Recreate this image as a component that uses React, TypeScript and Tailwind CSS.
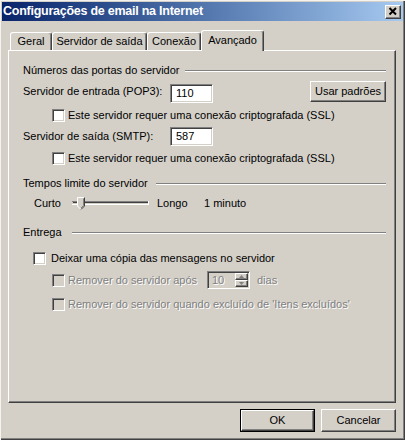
import React from "react";

const raised =
  "border border-t-white border-l-white border-r-[#404040] border-b-[#404040] shadow-[inset_-1px_-1px_0_#808080]";
const sunken =
  "border border-t-[#808080] border-l-[#808080] border-r-white border-b-white shadow-[inset_1px_1px_0_#404040,inset_-1px_-1px_0_#d4d0c8]";
const grayText = "text-[#808080] [text-shadow:1px_1px_0_#ffffff]";

function Checkbox({ disabled }: { disabled?: boolean }) {
  return (
    <span
      className={`block w-[13px] h-[13px] shrink-0 ${sunken} ${disabled ? "bg-[#d4d0c8]" : "bg-white"}`}
    />
  );
}

function GroupHeader({ label, labelWidth }: { label: string; labelWidth: string }) {
  return (
    <div className="flex items-center h-[13px]">
      <span className={`whitespace-nowrap shrink-0 ${labelWidth}`}>{label}</span>
      <div className="flex-1 h-[2px] border-t border-t-[#808080] border-b border-b-white" />
    </div>
  );
}

function Tab({ label, width, selected }: { label: string; width: string; selected?: boolean }) {
  return (
    <div
      className={`${width} flex items-center justify-center rounded-t-[3px] border-t border-l border-r border-t-white border-l-white border-r-[#404040] shadow-[inset_-1px_0_0_#808080] bg-[#d4d0c8] ${
        selected ? "h-[21px] pb-[2px]" : "h-[18px] mb-px"
      }`}
    >
      {label}
    </div>
  );
}

function Slider() {
  return (
    <svg width="80" height="20" viewBox="0 0 80 20" className="shrink-0">
      <line x1="0" y1="8.5" x2="77" y2="8.5" stroke="#808080" />
      <line x1="1" y1="9.5" x2="76" y2="9.5" stroke="#404040" />
      <line x1="0" y1="11.5" x2="77" y2="11.5" stroke="#ffffff" />
      <line x1="76.5" y1="8" x2="76.5" y2="12" stroke="#ffffff" />
      <polygon points="5,4 13,4 13,13 9,17 5,13" fill="#d4d0c8" />
      <polyline points="5.5,13 5.5,4.5 12.5,4.5" fill="none" stroke="#ffffff" />
      <polyline points="5.5,13 9,16.5" fill="none" stroke="#ffffff" />
      <polyline points="12.5,4.5 12.5,13 9,16.5" fill="none" stroke="#404040" />
      <polyline points="11.5,5.5 11.5,12.5 9,15" fill="none" stroke="#808080" />
    </svg>
  );
}

function SpinBox() {
  return (
    <div className={`w-[43px] h-[18px] shrink-0 flex items-stretch bg-[#d4d0c8] ${sunken}`}>
      <span className={`flex-1 pl-[4px] leading-[16px] ${grayText}`}>10</span>
      <div className="w-[15px] flex flex-col p-px">
        {[0, 1].map((i) => (
          <div key={i} className={`flex-1 flex items-center justify-center bg-[#d4d0c8] ${raised}`}>
            <svg width="5" height="3" viewBox="0 0 5 3">
              <polygon points={i === 0 ? "2.5,0 5,3 0,3" : "0,0 5,0 2.5,3"} fill="#808080" />
            </svg>
          </div>
        ))}
      </div>
    </div>
  );
}

function Button({ label, isDefault }: { label: string; isDefault?: boolean }) {
  const inner = (
    <div className={`h-full w-full flex items-center justify-center bg-[#d4d0c8] ${raised}`}>
      {label}
    </div>
  );
  return isDefault ? (
    <div className="w-[75px] h-[23px] border border-black">{inner}</div>
  ) : (
    <div className="w-[75px] h-[23px]">{inner}</div>
  );
}

export default function App() {
  return (
    <div className="w-[405px] h-[440px] bg-[#d4d0c8] overflow-hidden flex flex-col font-['Liberation_Sans',Arial,sans-serif] text-[11px] leading-[13px] text-black shadow-[inset_1px_1px_0_#f4f3ef,inset_-1px_-1px_0_#404040,inset_-2px_-2px_0_#808080]">
      {/* title bar */}
      <div className="mt-[2px] mx-[2px] h-[19px] flex items-center bg-linear-to-r from-[#0a246a] to-[#a6caf0]">
        <span className="pl-[1px] text-white font-bold text-[12.5px] tracking-[-0.25px] whitespace-nowrap">
          Configurações de email na Internet
        </span>
        <div className={`ml-auto mr-[2px] w-[16px] h-[14px] flex items-center justify-center bg-[#d4d0c8] ${raised}`}>
          <svg width="10" height="9" viewBox="0 0 10 9">
            <path d="M1.5 1 L8 7.5 M8 1 L1.5 7.5" stroke="#000" strokeWidth="2" />
          </svg>
        </div>
      </div>

      {/* tabs */}
      <div className="mt-[9px] ml-[10px] h-[21px] -mb-px relative z-10 flex items-end">
        <Tab label="Geral" width="w-[42px]" />
        <Tab label="Servidor de saída" width="w-[95px]" />
        <Tab label="Conexão" width="w-[54px]" />
        <Tab label="Avançado" width="w-[63px]" selected />
      </div>

      {/* panel */}
      <div className="ml-[8px] w-[388px] h-[353px] flex flex-col pl-[14px] pr-[9px] border border-t-white border-l-white border-r-[#404040] border-b-[#404040] shadow-[inset_-1px_-1px_0_#808080]">
        <div className="mt-[13px]">
          <GroupHeader label="Números das portas do servidor" labelWidth="w-[162px]" />
        </div>

        <div className="mt-[4px] h-[21px] flex">
          <span className="w-[147px] self-center whitespace-nowrap">Servidor de entrada (POP3):</span>
          <div className={`mt-[3px] w-[43px] h-[19px] bg-white pl-[5px] leading-[17px] ${sunken}`}>110</div>
          <div className="ml-auto w-[76px] h-[21px]">
            <div className={`h-full flex items-center justify-center bg-[#d4d0c8] ${raised}`}>Usar padrões</div>
          </div>
        </div>

        <div className="mt-[7px] h-[13px] pl-[29px] flex items-center">
          <Checkbox />
          <span className="ml-[3px] whitespace-nowrap">Este servidor requer uma conexão criptografada (SSL)</span>
        </div>

        <div className="mt-[5px] h-[19px] flex items-center">
          <span className="w-[147px] whitespace-nowrap">Servidor de saída (SMTP):</span>
          <div className={`w-[43px] h-[19px] bg-white pl-[5px] leading-[17px] ${sunken}`}>587</div>
        </div>

        <div className="mt-[6px] h-[13px] pl-[29px] flex items-center">
          <Checkbox />
          <span className="ml-[3px] whitespace-nowrap">Este servidor requer uma conexão criptografada (SSL)</span>
        </div>

        <div className="mt-[12px]">
          <GroupHeader label="Tempos limite do servidor" labelWidth="w-[133px]" />
        </div>

        <div className="mt-[3px] h-[20px] pl-[11px] flex items-center">
          <span className="w-[38px]">Curto</span>
          <Slider />
          <span className="ml-[5px] w-[47px]">Longo</span>
          <span>1 minuto</span>
        </div>

        <div className="mt-[13px]">
          <GroupHeader label="Entrega" labelWidth="w-[49px]" />
        </div>

        <div className="mt-[13px] h-[13px] pl-[10px] flex items-center">
          <Checkbox />
          <span className="ml-[5px] whitespace-nowrap">Deixar uma cópia das mensagens no servidor</span>
        </div>

        <div className="mt-[6px] h-[18px] pl-[29px] flex items-center">
          <Checkbox disabled />
          <span className={`ml-[3px] w-[139px] whitespace-nowrap ${grayText}`}>Remover do servidor após</span>
          <SpinBox />
          <span className={`ml-[7px] ${grayText}`}>dias</span>
        </div>

        <div className="mt-[9px] h-[13px] pl-[29px] flex items-center">
          <Checkbox disabled />
          <span className={`ml-[3px] whitespace-nowrap ${grayText}`}>
            Remover do servidor quando excluído de 'Itens excluídos'
          </span>
        </div>
      </div>

      {/* buttons */}
      <div className="mt-[6px] pr-[9px] flex justify-end gap-[6px]">
        <Button label="OK" isDefault />
        <Button label="Cancelar" />
      </div>
    </div>
  );
}
